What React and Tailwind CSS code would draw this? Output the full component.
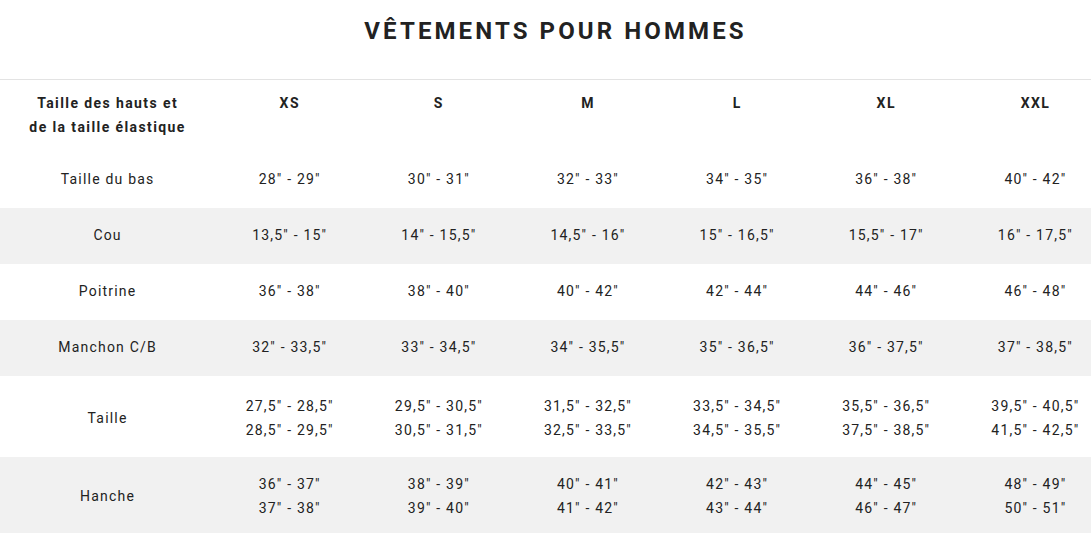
const sizes = ['XS', 'S', 'M', 'L', 'XL', 'XXL'];

const rows = [
  { label: 'Taille du bas', pad: 'pt-[15px] pb-[17px]', values: [['28" - 29"'], ['30" - 31"'], ['32" - 33"'], ['34" - 35"'], ['36" - 38"'], ['40" - 42"']] },
  { label: 'Cou', pad: 'pt-[15px] pb-[17px]', values: [['13,5" - 15"'], ['14" - 15,5"'], ['14,5" - 16"'], ['15" - 16,5"'], ['15,5" - 17"'], ['16" - 17,5"']] },
  { label: 'Poitrine', pad: 'pt-[15px] pb-[17px]', values: [['36" - 38"'], ['38" - 40"'], ['40" - 42"'], ['42" - 44"'], ['44" - 46"'], ['46" - 48"']] },
  { label: 'Manchon C/B', pad: 'pt-[15px] pb-[17px]', values: [['32" - 33,5"'], ['33" - 34,5"'], ['34" - 35,5"'], ['35" - 36,5"'], ['36" - 37,5"'], ['37" - 38,5"']] },
  {
    label: 'Taille',
    pad: 'pt-[18px] pb-[15px]',
    values: [
      ['27,5" - 28,5"', '28,5" - 29,5"'],
      ['29,5" - 30,5"', '30,5" - 31,5"'],
      ['31,5" - 32,5"', '32,5" - 33,5"'],
      ['33,5" - 34,5"', '34,5" - 35,5"'],
      ['35,5" - 36,5"', '37,5" - 38,5"'],
      ['39,5" - 40,5"', '41,5" - 42,5"'],
    ],
  },
  {
    label: 'Hanche',
    pad: 'pt-[15px] pb-[17px]',
    values: [
      ['36" - 37"', '37" - 38"'],
      ['38" - 39"', '39" - 40"'],
      ['40" - 41"', '41" - 42"'],
      ['42" - 43"', '43" - 44"'],
      ['44" - 45"', '46" - 47"'],
      ['48" - 49"', '50" - 51"'],
    ],
  },
];

export default function App() {
  return (
    <div className="w-[1091px] h-[533px] overflow-hidden bg-white text-[#222] font-['Roboto',sans-serif]">
      {/* Title */}
      <div className="h-[79px] flex items-start justify-center pt-[16px]">
        <h1 className="text-[24px] leading-[30px] font-bold tracking-[3.1px] pl-[20px]">VÊTEMENTS POUR HOMMES</h1>
      </div>

      <div className="border-t border-[#e3e3e3]">
        <table className="w-[1110px] table-fixed border-collapse text-[14px] leading-[24px] tracking-[1.2px]">
          <colgroup>
            <col className="w-[215px]" />
            {sizes.map((s) => (
              <col key={s} className="w-[149px]" />
            ))}
          </colgroup>
          <thead>
            <tr className="h-[72px]">
              <th className="align-top pt-[11px] font-bold tracking-[1.4px]">
                Taille des hauts et
                <br />
                de la taille élastique
              </th>
              {sizes.map((s) => (
                <th key={s} className="align-top pt-[11px] font-bold tracking-[1.4px]">
                  {s}
                </th>
              ))}
            </tr>
          </thead>
          <tbody>
            {rows.map((row, i) => (
              <tr key={row.label} className={i % 2 === 1 ? 'bg-[#f1f1f1]' : 'bg-white'}>
                <td className={`text-center align-middle ${row.pad}`}>{row.label}</td>
                {row.values.map((lines, j) => (
                  <td key={j} className={`text-center align-middle ${row.pad}`}>
                    {lines.map((l) => (
                      <div key={l}>{l}</div>
                    ))}
                  </td>
                ))}
              </tr>
            ))}
          </tbody>
        </table>
      </div>
    </div>
  );
}
